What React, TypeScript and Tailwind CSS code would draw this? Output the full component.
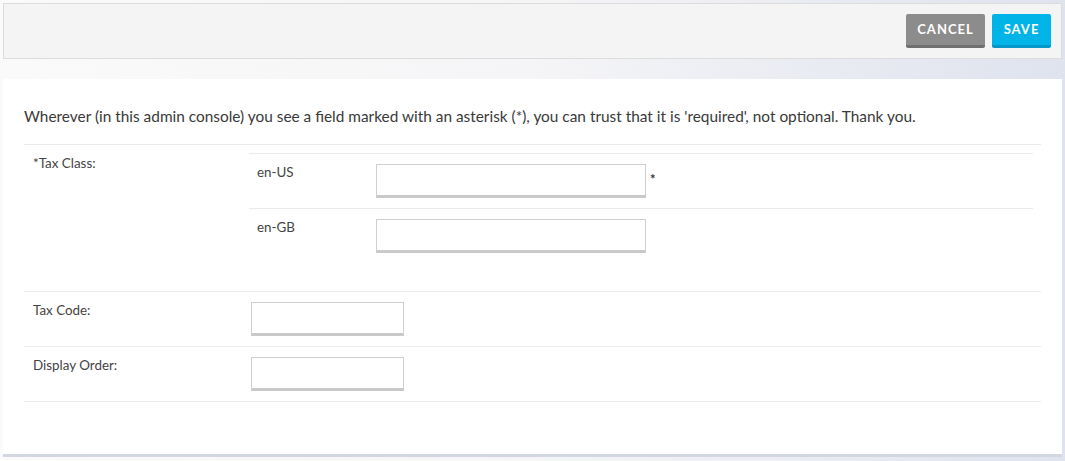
import React from 'react';

const font = { fontFamily: 'Lato, "Noto Sans", sans-serif' };

function TextInput({ className }: { className: string }) {
  return (
    <input
      type="text"
      className={`h-[34px] border border-[#cfcfcf] border-b-[3px] border-b-[#c9c9c9] bg-white outline-none ${className}`}
    />
  );
}

function FieldRow({ label, children }: { label: string; children: React.ReactNode }) {
  return (
    <div className="flex border-b border-[#ebebeb] pt-[10px] pb-[10px]">
      <div className="w-[227px] shrink-0 pl-[9px] text-[13.4px] leading-[16px] text-[#444]">{label}</div>
      <div className="flex-1">{children}</div>
    </div>
  );
}

function LocaleRow({ locale, required }: { locale: string; required?: boolean }) {
  return (
    <div className="flex border-t border-[#ebebeb] pt-[10px] pb-[10px]">
      <div className="w-[127px] shrink-0 pl-[8px] text-[13.4px] leading-[16px] text-[#444]">{locale}</div>
      <div className="flex items-start">
        <TextInput className="w-[270px]" />
        {required ? <span className="ml-[4px] mt-[6px] text-[13px] font-bold text-[#333]">*</span> : null}
      </div>
    </div>
  );
}

export default function App() {
  return (
    <div
      className="h-[461px] w-[1065px] bg-gradient-to-r from-[#fafafa] via-[#f5f5f7] to-[#dfe3ee] pt-[3px]"
      style={font}
    >
      <div className="mx-[3px] flex h-[56px] items-center justify-end gap-[7px] border border-[#dcdcdc] bg-[#f4f4f4] pr-[10px]">
        <button className="h-[34px] w-[79px] rounded-[2px] border-b-[3px] border-[#707070] bg-[#8c8c8c] text-[13px] font-bold tracking-[1px] text-white">
          CANCEL
        </button>
        <button className="h-[34px] w-[59px] rounded-[2px] border-b-[3px] border-[#0398c8] bg-[#00b4e8] text-[13px] font-bold tracking-[1px] text-white">
          SAVE
        </button>
      </div>

      <div className="mx-[3px] mt-[20px] h-[378px] border-b-[3px] border-[#d3d7e2] bg-white px-[21px] pt-[26px]">
        <p className="text-[15.4px] text-[#3a3a3a]">
          Wherever (in this admin console) you see a field marked with an asterisk (*), you can trust that it is
          'required', not optional. Thank you.
        </p>

        <div className="mt-[16px] border-t border-[#ebebeb]">
          <div className="flex border-b border-[#ebebeb] pt-[8px] pb-[28px]">
            <div className="w-[225px] shrink-0 pl-[9px] pt-[2px] text-[13.4px] leading-[16px] text-[#444]">
              *Tax Class:
            </div>
            <div className="mr-[8px] flex-1">
              <LocaleRow locale="en-US" required />
              <LocaleRow locale="en-GB" />
            </div>
          </div>
          <FieldRow label="Tax Code:">
            <TextInput className="w-[153px]" />
          </FieldRow>
          <FieldRow label="Display Order:">
            <TextInput className="w-[153px]" />
          </FieldRow>
        </div>
      </div>
    </div>
  );
}
